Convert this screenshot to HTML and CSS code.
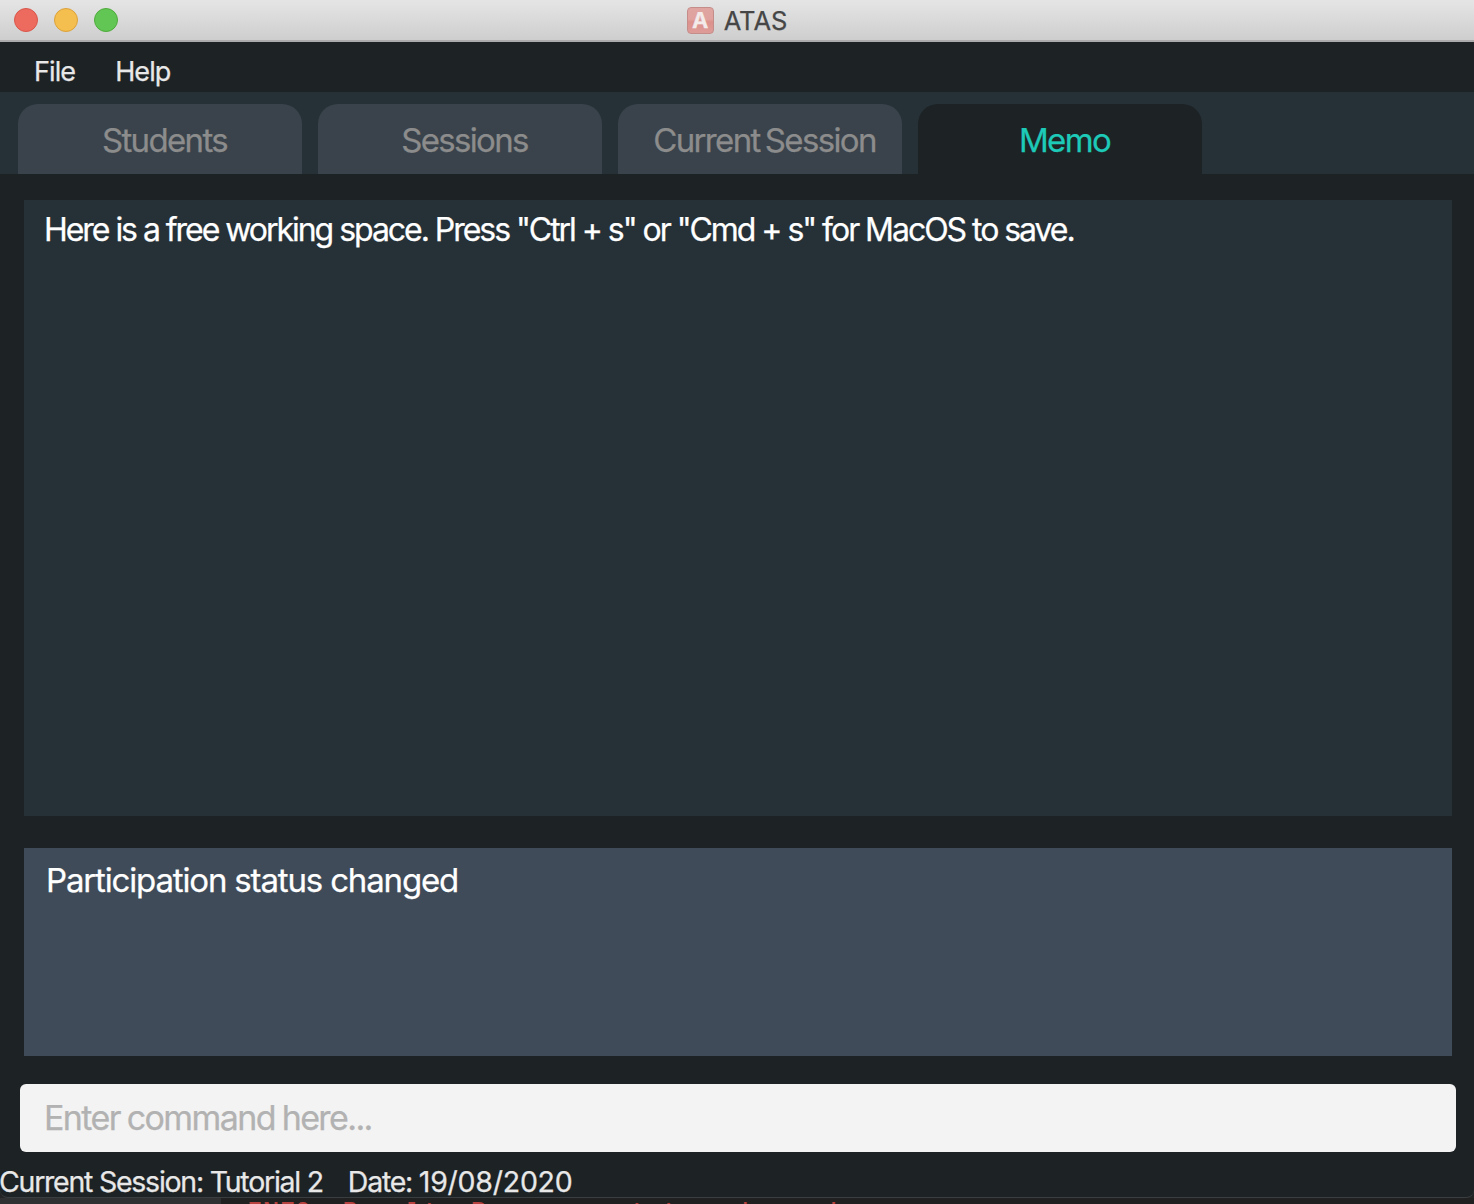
FILE: index.html
```html
<!DOCTYPE html>
<html lang="en">
<head>
<meta charset="utf-8">
<title>ATAS</title>
<link rel="stylesheet" href="styles.css">
</head>
<body>
<div class="window">
  <header class="titlebar">
    <div class="lights">
      <span class="light light-close"></span>
      <span class="light light-min"></span>
      <span class="light light-max"></span>
    </div>
    <div class="title"><span class="app-icon"><span class="app-letter">A</span></span><span class="title-text">ATAS</span></div>
  </header>
  <nav class="menubar"><span class="menu">File</span><span class="menu">Help</span></nav>
  <div class="tabs">
    <div class="tab">Students</div>
    <div class="tab">Sessions</div>
    <div class="tab">Current Session</div>
    <div class="tab tab-active">Memo</div>
  </div>
  <main class="content">
    <section class="memo">Here is a free working space. Press "Ctrl + s" or "Cmd + s" for MacOS to save.</section>
    <section class="result">Participation status changed</section>
    <div class="command">Enter command here...</div>
  </main>
  <footer class="status"><span>Current Session: Tutorial 2</span><span>Date: <span class="digits">19/08/2020</span></span></footer>
</div>
<div class="backdrop"><div class="gutter"></div><div class="console"><span class="log">INFO: Result: Presence status changed</span></div></div>
</body>
</html>
```
FILE: styles.css
```css
* { box-sizing: border-box; }
body {
  margin: 0;
  width: 1474px;
  height: 1204px;
  overflow: hidden;
  display: flex;
  flex-direction: column;
  background: #232425;
  font-family: Inter, "Liberation Sans", sans-serif;
  white-space: nowrap;
  -webkit-text-stroke: 0.25px currentColor;
}
.window {
  height: 1198px;
  flex: none;
  display: flex;
  flex-direction: column;
  background: #1d2225;
  border-bottom: 1px solid #3b3e41;
  border-radius: 0 0 8px 8px;
  overflow: hidden;
}
.titlebar {
  height: 42px;
  flex: none;
  display: grid;
  grid-template-columns: 1fr auto 1fr;
  align-items: center;
  background: linear-gradient(#e5e5e5, #cecece);
  border-bottom: 2px solid #acacac;
}
.lights { display: flex; gap: 16px; padding-left: 14px; }
.light { width: 24px; height: 24px; border-radius: 50%; border: 1px solid; }
.light-close { background: #ed6a5e; border-color: #d9564b; }
.light-min { background: #f5bf4f; border-color: #dca13b; }
.light-max { background: #61c654; border-color: #4fab3c; }
.title { display: flex; align-items: center; gap: 10px; }
.app-icon {
  width: 27px;
  height: 27px;
  border-radius: 4px;
  border: 1px solid #c58d8a;
  background: linear-gradient(#dfa5a1, #e0a29e 45%, #dc918c 55%, #dd9c98);
  display: flex;
  align-items: center;
  justify-content: center;
}
.app-letter { color: #f3eaea; font-size: 22px; line-height: 25px; font-weight: 700; }
.title-text { padding-top: 2px; font-size: 25.5px; line-height: 34px; color: #464646; }
.menubar {
  height: 50px;
  flex: none;
  display: flex;
  gap: 40px;
  padding: 13px 34px 0;
  color: #e8e8e8;
  font-size: 27px;
  line-height: 34px;
}
.menu { letter-spacing: -0.9px; }
.tabs {
  height: 82px;
  flex: none;
  display: flex;
  gap: 16px;
  padding: 12px 18px 0;
  background: #263137;
}
.tab {
  width: 284px;
  padding: 16px 0 0 9px;
  text-align: center;
  border-radius: 20px 20px 0 0;
  background: #3a434b;
  color: #8c8c8c;
  font-size: 33px;
  line-height: 40px;
  letter-spacing: -1.65px;
  word-spacing: -2.5px;
}
.tab-active { background: #1d2225; color: #1dc9b7; }
.content {
  flex: none;
  display: flex;
  flex-direction: column;
  padding: 26px 18px 0 20px;
}
.memo {
  height: 616px;
  margin: 0 4px 32px;
  padding: 10px 20px;
  background: #263137;
  color: #fff;
  font-size: 32px;
  line-height: 40px;
  letter-spacing: -2.04px;
}
.result {
  height: 208px;
  margin: 0 4px 28px;
  padding: 12px 22px;
  background: #3f4b58;
  color: #fff;
  font-size: 33px;
  line-height: 40px;
  letter-spacing: -1.16px;
}
.command {
  height: 68px;
  padding: 14px 24px;
  border-radius: 6px;
  background: #f3f3f3;
  color: #b2b2b2;
  font-size: 34px;
  line-height: 40px;
  letter-spacing: -1.6px;
  word-spacing: -1.2px;
}
.status {
  flex: none;
  display: flex;
  gap: 25px;
  margin-left: -1px;
  padding-top: 13px;
  color: #e8e8e8;
  font-size: 28.5px;
  line-height: 34px;
  letter-spacing: -1.25px;
}
.digits { letter-spacing: -0.25px; }
.backdrop { height: 6px; flex: none; display: flex; overflow: hidden; }
.gutter { width: 221px; background: #2f3032; }
.console { flex: 1; background: #202020; overflow: hidden; }
.log {
  display: block;
  padding-left: 26px;
  color: #b8423f;
  font-family: "DejaVu Sans Mono", monospace;
  font-size: 26.5px;
  line-height: 29px;
}
```
